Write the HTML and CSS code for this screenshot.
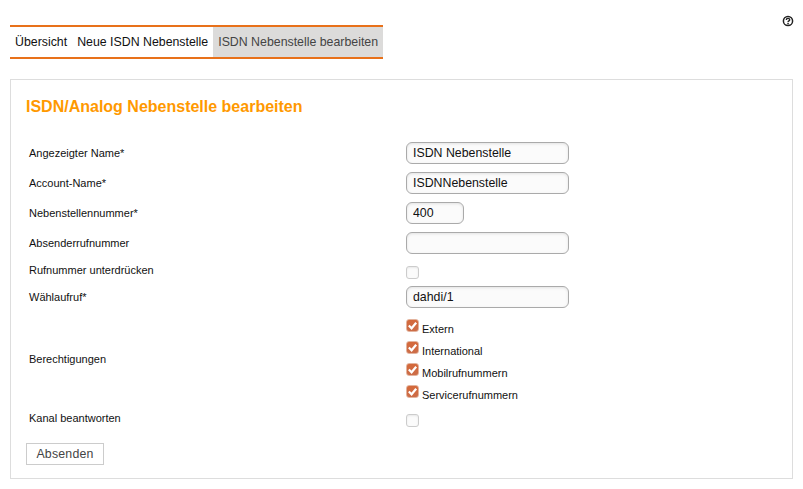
FILE: index.html
```html
<!DOCTYPE html>
<html lang="en">
<head>
    <meta charset="UTF-8">
    <title>ISDN Nebenstelle bearbeiten</title>
    <link rel="stylesheet" href="styles.css">
</head>
<body>
    <a class="help" href="#" aria-label="Hilfe">
        <svg viewBox="0 0 12 12" width="12" height="12"><circle cx="6" cy="6" r="4.6" fill="none" stroke="#222" stroke-width="1.5"/><path d="M4.3 4.9c0-1 .8-1.5 1.7-1.5s1.7.5 1.7 1.4c0 1.2-1.6 1.1-1.6 2.3" fill="none" stroke="#222" stroke-width="1.4"/><rect x="5.3" y="7.8" width="1.5" height="1.5" fill="#222"/></svg>
    </a>
    <ul class="tabs">
        <li><a href="#">Übersicht</a></li>
        <li><a href="#">Neue ISDN Nebenstelle</a></li>
        <li class="active"><a href="#">ISDN Nebenstelle bearbeiten</a></li>
    </ul>
    <div class="box">
        <h1>ISDN/Analog Nebenstelle bearbeiten</h1>
        <form class="form">
            <div class="row">
                <label>Angezeigter Name*</label>
                <input class="text" type="text" value="ISDN Nebenstelle">
            </div>
            <div class="row">
                <label>Account-Name*</label>
                <input class="text" type="text" value="ISDNNebenstelle">
            </div>
            <div class="row">
                <label>Nebenstellennummer*</label>
                <input class="text short" type="text" value="400">
            </div>
            <div class="row">
                <label>Absenderrufnummer</label>
                <input class="text" type="text">
            </div>
            <div class="row row-check">
                <label>Rufnummer unterdrücken</label>
                <span class="check"></span>
            </div>
            <div class="row">
                <label>Wählaufruf*</label>
                <input class="text" type="text" value="dahdi/1">
            </div>
            <div class="row row-perms">
                <label>Berechtigungen</label>
                <div class="perms">
                    <div class="perm"><span class="check on"><svg viewBox="0 0 12 12"><path d="M2 6l3 3 5-6" fill="none" stroke="#fff" stroke-width="2.4"/></svg></span><span class="perm-name">Extern</span></div>
                    <div class="perm"><span class="check on"><svg viewBox="0 0 12 12"><path d="M2 6l3 3 5-6" fill="none" stroke="#fff" stroke-width="2.4"/></svg></span><span class="perm-name">International</span></div>
                    <div class="perm"><span class="check on"><svg viewBox="0 0 12 12"><path d="M2 6l3 3 5-6" fill="none" stroke="#fff" stroke-width="2.4"/></svg></span><span class="perm-name">Mobilrufnummern</span></div>
                    <div class="perm"><span class="check on"><svg viewBox="0 0 12 12"><path d="M2 6l3 3 5-6" fill="none" stroke="#fff" stroke-width="2.4"/></svg></span><span class="perm-name">Servicerufnummern</span></div>
                </div>
            </div>
            <div class="row row-check">
                <label>Kanal beantworten</label>
                <span class="check"></span>
            </div>
            <button class="submit" type="button">Absenden</button>
        </form>
    </div>
</body>
</html>
```
FILE: styles.css
```css
body {
    margin: 0;
    padding: 25px 10px 10px;
    font-family: "Liberation Sans", Arial, sans-serif;
    font-size: 11px;
    color: #111;
    background-color: #fff;
}
a {
    color: inherit;
    text-decoration: none;
}
.help {
    position: absolute;
    top: 15px;
    left: 782px;
    line-height: 0;
}
.tabs {
    display: flex;
    width: max-content;
    margin: 0;
    padding: 0;
    list-style: none;
    border-top: 2px solid #e8711a;
    border-bottom: 2px solid #e8711a;
    font-size: 12.35px;
}
.tabs a {
    display: block;
    padding: 0 5px;
    line-height: 30px;
}
.tabs .active {
    background-color: #dcdbda;
    color: #444;
}
.box {
    box-sizing: border-box;
    width: 783px;
    height: 400px;
    margin-top: 20px;
    padding: 17px 15px 0;
    border: 1px solid #ddd;
}
h1 {
    margin: 0 0 21px;
    font-size: 16px;
    line-height: 20px;
    color: #ff9900;
}
.row {
    display: flex;
    align-items: center;
    height: 30px;
    padding-left: 3px;
}
.row label {
    width: 377px;
    flex: none;
}
.text {
    box-sizing: border-box;
    width: 163px;
    height: 22px;
    padding: 0 6px;
    border: 1px solid #aaa;
    border-radius: 6px;
    background-color: #fbfbfb;
    font-family: inherit;
    font-size: 12.35px;
    color: #111;
    box-shadow: inset 0 1px 3px rgba(0,0,0,0.1);
}
.short {
    width: 58px;
}
.row-check {
    height: 24px;
}
.row-check .check {
    margin-top: 4px;
}
.check {
    display: block;
    box-sizing: border-box;
    width: 13px;
    height: 13px;
    flex: none;
    border: 1px solid #ccc;
    border-radius: 3px;
    background-color: #fbfbfb;
    box-shadow: inset 0 1px 2px rgba(0,0,0,0.08);
}
.check.on {
    border-color: #e3b39d;
    background: linear-gradient(#d4693b, #cc6d48);
    box-shadow: none;
}
.check svg {
    display: block;
    width: 11px;
    height: 11px;
}
.row-perms {
    height: 94px;
}
.perms {
    display: flex;
    flex-direction: column;
    gap: 4px;
    margin-top: 4px;
}
.perm {
    display: flex;
    height: 18px;
}
.perm-name {
    margin: 3px 0 0 3px;
    line-height: 14px;
}
.submit {
    display: block;
    box-sizing: border-box;
    width: 78px;
    height: 22px;
    margin-top: 13px;
    padding: 0;
    border: 1px solid #ccc;
    background-color: #fff;
    font-family: inherit;
    font-size: 12.35px;
    letter-spacing: 0.2px;
    color: #444;
}
```
